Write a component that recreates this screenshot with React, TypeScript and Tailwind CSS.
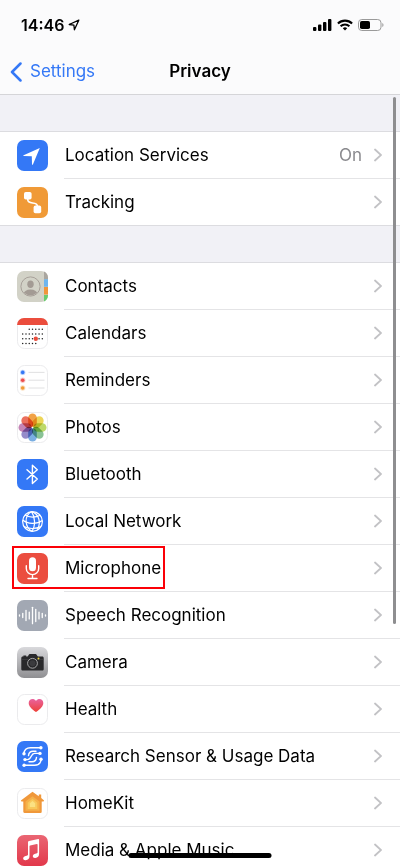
import type { ReactNode } from "react";

const calendarDots = [
  { y: 11.3, from: 2, to: 6 },
  { y: 16, from: 0, to: 6 },
  { y: 20.7, from: 0, to: 6 },
  { y: 25.4, from: 0, to: 4 },
];

const petals = ["#f09a36", "#ecd24a", "#b9d65c", "#7fbd8c", "#6fa8e0", "#8c82c6", "#c07bb0", "#ea6450"];

const speechBars = [0.6, 2, 5, 3.4, 8.2, 6, 3.4, 2, 0.6];

function Tile({ fill, outlined, children }: { fill: string; outlined?: boolean; children?: ReactNode }) {
  return (
    <svg viewBox="0 0 31 31" className="size-[31px] shrink-0" aria-hidden="true">
      <rect
        x={outlined ? 0.5 : 0}
        y={outlined ? 0.5 : 0}
        width={outlined ? 30 : 31}
        height={outlined ? 30 : 31}
        rx="7"
        fill={fill}
        stroke={outlined ? "#ebebed" : "none"}
      />
      {children}
    </svg>
  );
}

function LocationIcon() {
  return (
    <Tile fill="#3478f6">
      <path d="M22.8 8 6.6 15.2c-.5.3-.4.9.2.9l8 .2.2 8c0 .6.7.7.9.2z" fill="#fff" />
    </Tile>
  );
}

function TrackingIcon() {
  return (
    <Tile fill="#f09a37">
      <rect x="7" y="5" width="7.6" height="7.6" rx="1.8" fill="#fff" />
      <rect x="16.6" y="18.6" width="7.6" height="7.6" rx="1.8" fill="#fff" />
      <path d="M10.8 12v1c0 4.6 9.6 1.4 9.6 6v1" fill="none" stroke="#fff" strokeWidth="1.6" />
    </Tile>
  );
}

function ContactsIcon() {
  return (
    <Tile fill="#d2d2c7">
      <path d="M27 .5a7 7 0 0 1 4 6.500v1.500h-4z" fill="#aaa69f" />
      <path d="M27 8.300h4v7.400h-4z" fill="#6eb5ee" />
      <path d="M27 16h4v7.500h-4z" fill="#f0953a" />
      <path d="M27 24h4a7 7 0 0 1-4 6.500z" fill="#68cc6d" />
      <clipPath id="contact-circle">
        <circle cx="13.5" cy="15.5" r="9" />
      </clipPath>
      <circle cx="13.5" cy="15.5" r="9.6" fill="none" stroke="#a39b94" strokeWidth="0.9" />
      <g fill="#a39b94" clipPath="url(#contact-circle)">
        <ellipse cx="13.5" cy="13.2" rx="3.2" ry="3.7" />
        <ellipse cx="13.5" cy="23.6" rx="7.2" ry="5" />
      </g>
    </Tile>
  );
}

function CalendarIcon() {
  return (
    <Tile fill="#fff" outlined>
      <path d="M0 7a7 7 0 0 1 7-7h17a7 7 0 0 1 7 7z" fill="#eb4d3d" />
      {calendarDots.map((row) =>
        Array.from({ length: row.to - row.from + 1 }, (_, i) => (
          <circle key={`${row.y}-${i}`} cx={5.7 + (row.from + i) * 3.27} cy={row.y} r="0.75" fill="#222" />
        )),
      )}
      <circle cx="18.8" cy="20.7" r="2.2" fill="#eb4d3d" />
    </Tile>
  );
}

function RemindersIcon() {
  return (
    <Tile fill="#fff" outlined>
      {["#3478f6", "#eb4d4d", "#f09a37"].map((color, i) => (
        <g key={color}>
          <circle cx="5.7" cy={7.4 + i * 7.8} r="2.7" fill={color} opacity="0.3" />
          <circle cx="5.7" cy={7.4 + i * 7.8} r="1.8" fill={color} />
          <path d={`M11.5 ${7.4 + i * 7.8}H27.5`} stroke="#dcdcde" strokeWidth="0.9" />
        </g>
      ))}
    </Tile>
  );
}

function PhotosIcon() {
  return (
    <Tile fill="#fff" outlined>
      {petals.map((color, i) => (
        <rect
          key={color}
          x="11.2"
          y="1.5"
          width="8.6"
          height="13.2"
          rx="4.3"
          fill={color}
          opacity="0.92"
          transform={`rotate(${i * 45} 15.5 15.5)`}
          className="mix-blend-multiply"
        />
      ))}
    </Tile>
  );
}

function BluetoothIcon() {
  return (
    <Tile fill="#3478f6">
      <path
        d="M10 10.8 20.3 20l-4.9 4.5V6.3l4.9 4.5L10 20"
        fill="none"
        stroke="#fff"
        strokeWidth="1.4"
        strokeLinejoin="round"
        strokeLinecap="round"
      />
    </Tile>
  );
}

function NetworkIcon() {
  return (
    <Tile fill="#3478f6">
      <g fill="none" stroke="#fff" strokeWidth="1.2">
        <circle cx="15.5" cy="15.5" r="9.9" />
        <path d="M14.5 5.6c-8 4.900-6.500 15 .2 19.800M14.500 5.600c3.500 5 4.500 14 .2 19.800M14.500 5.600c8 2.400 9.500 11.400 6 17.800" />
        <path d="M8 9c4 2.800 11 2.600 15.200.2M5.700 14c4.800 4.400 14.400 4.400 19.700.6M7 20.600c4 2.400 11.800 2.600 16.800 0" />
      </g>
    </Tile>
  );
}

function MicrophoneIcon() {
  return (
    <Tile fill="#eb4d3f">
      <rect x="12" y="4.3" width="7" height="14" rx="3.5" fill="#fff" />
      <path
        d="M9.300 12.800v2.600a6.200 6.200 0 0 0 12.400 0v-2.600M15.500 21.600v3.600M11 25.500h9"
        fill="none"
        stroke="#fff"
        strokeWidth="1.4"
        strokeLinecap="round"
      />
    </Tile>
  );
}

function SpeechIcon() {
  return (
    <Tile fill="#a2a8b3">
      {speechBars.map((half, i) => (
        <path
          key={i}
          d={`M${2.5 + i * 3.25} ${15.5 - half}v${half * 2}`}
          stroke="#fff"
          strokeWidth="1.3"
          strokeLinecap="round"
        />
      ))}
    </Tile>
  );
}

function CameraIcon() {
  return (
    <Tile fill="url(#camera-bg)">
      <linearGradient id="camera-bg" x1="0" y1="0" x2="0" y2="1">
        <stop offset="0" stopColor="#d9d9dc" />
        <stop offset="1" stopColor="#8f8f92" />
      </linearGradient>
      <path
        d="M5.8 9.500h.6V8.400h2.800v1.100h1.300c.9 0 1-2.500 2.200-2.500h6c1.200 0 1.400 2.500 2.300 2.500h4.200c1 0 1.500.6 1.500 1.500v11c0 1-.5 1.600-1.500 1.600H5.800c-1 0-1.500-.6-1.500-1.600V11c0-.9.500-1.500 1.500-1.500z"
        fill="#29292b"
      />
      <path d="M4.300 12.500h22.400" stroke="#4c4c4e" strokeWidth="0.5" />
      <circle cx="15.5" cy="16.3" r="4.900" fill="#29292b" stroke="#b4b4b6" strokeWidth="0.9" />
      <circle cx="15.5" cy="16.3" r="3" fill="#3b3b3e" />
      <circle cx="21.5" cy="11.6" r="1" fill="#f0d53c" />
    </Tile>
  );
}

function HealthIcon() {
  return (
    <Tile fill="#fff" outlined>
      <linearGradient id="heart" x1="0" y1="0" x2="0" y2="1">
        <stop offset="0" stopColor="#e9639f" />
        <stop offset="1" stopColor="#ee4036" />
      </linearGradient>
      <path
        d="M19 18C14.500 14.800 11.700 12 11.700 8.900c0-4 5-5.300 7.300-2 2.300-3.300 7.300-2 7.300 2 0 3.100-2.800 5.900-7.300 9.100z"
        fill="url(#heart)"
      />
    </Tile>
  );
}

function ResearchIcon() {
  return (
    <Tile fill="#3478f6">
      <g fill="none" stroke="#fff" strokeWidth="1.4" strokeLinecap="round">
        <path d="M23.800 6.800H13.500c-4 0-6.300 1.800-6.600 6" />
        <path d="M7.200 24.200h10.300c4 0 6.300-1.800 6.600-6" />
        <path d="M22.800 12.400h-5.300c-3.800 0-3 6.200-7 6.200H8" />
        <path d="M11.500 14.600c.3-2.800 1.700-4.400 4.500-4.400h3" />
        <path d="M19.500 16.400c-.3 2.800-1.700 4.400-4.500 4.400h-3" />
      </g>
      <g fill="#fff">
        <circle cx="23.900" cy="6.800" r="1.700" />
        <circle cx="23" cy="12.400" r="1.700" />
        <circle cx="24" cy="18.200" r="1.700" />
        <circle cx="7" cy="12.800" r="1.700" />
        <circle cx="8" cy="18.600" r="1.700" />
        <circle cx="7.100" cy="24.200" r="1.700" />
      </g>
    </Tile>
  );
}

function HomeIcon() {
  return (
    <Tile fill="#fff" outlined>
      <path
        d="M15.500 3.800 4.200 12.300c-.5.500-.2 1.200.5 1.200h1.600v10.200c0 .8.400 1.200 1.200 1.200h16c.8 0 1.200-.4 1.200-1.200V13.500h1.600c.7 0 1-.7.500-1.200L24.200 10V6.500h-2.400v1.700z"
        fill="#f0983a"
      />
      <path d="m15.500 8.200-7 5.400v9.200h14v-9.200z" fill="#f5b14b" />
      <path d="m15.500 10.800-4.800 3.900v6.200h9.600v-6.200z" fill="#f8c95c" />
      <path d="m15.500 13-2.700 2.300v3.800h5.400v-3.800z" fill="#fbe183" />
    </Tile>
  );
}

function MusicIcon() {
  return (
    <Tile fill="url(#music-bg)">
      <linearGradient id="music-bg" x1="0" y1="0" x2="0" y2="1">
        <stop offset="0" stopColor="#ea6673" />
        <stop offset="1" stopColor="#e2384b" />
      </linearGradient>
      <path
        d="M21.300 4 12 5.900c-.7.200-1 .5-1 1.200v12.200c0 1-.4 1.300-1.300 1.500l-1.200.3c-3.300.8-2.900 4.500.2 4.200 2.500-.2 3.800-1.700 3.800-4.200v-9.800c0-.5.200-.7.600-.8l6.700-1.400c.5-.1.800.1.800.6v7.300c0 1-.4 1.300-1.300 1.500l-1.200.3c-3.300.8-2.900 4.500.2 4.200 2.500-.2 3.800-1.700 3.800-4.200V4.900c0-.7-.3-1-.8-.9z"
        fill="#fff"
      />
    </Tile>
  );
}

type Item = { label: string; icon: ReactNode; value?: string; marked?: boolean };

const locationItems: Item[] = [
  { label: "Location Services", icon: <LocationIcon />, value: "On" },
  { label: "Tracking", icon: <TrackingIcon /> },
];

const privacyItems: Item[] = [
  { label: "Contacts", icon: <ContactsIcon /> },
  { label: "Calendars", icon: <CalendarIcon /> },
  { label: "Reminders", icon: <RemindersIcon /> },
  { label: "Photos", icon: <PhotosIcon /> },
  { label: "Bluetooth", icon: <BluetoothIcon /> },
  { label: "Local Network", icon: <NetworkIcon /> },
  { label: "Microphone", icon: <MicrophoneIcon />, marked: true },
  { label: "Speech Recognition", icon: <SpeechIcon /> },
  { label: "Camera", icon: <CameraIcon /> },
  { label: "Health", icon: <HealthIcon /> },
  { label: "Research Sensor & Usage Data", icon: <ResearchIcon /> },
  { label: "HomeKit", icon: <HomeIcon /> },
  { label: "Media & Apple Music", icon: <MusicIcon /> },
];

function Row({ label, icon, value, marked }: Item) {
  return (
    <li className="group relative">
      <a href="#" className="flex h-[47px] gap-4 pl-[17px] group-last:h-[46px]">
        <span className="flex items-center">{icon}</span>
        <span className="flex flex-1 items-center border-b border-[#e4e4e6] pr-[18px] group-last:border-b-0">
          <span className="flex-1 pt-0.5 pl-px">{label}</span>
          {value && <span className="mr-3 pt-0.5 text-[#8a8a8e]">{value}</span>}
          <svg viewBox="0 0 8 14" className="h-3.5 w-2" fill="none" aria-hidden="true">
            <path d="m1 1.500 6 5.500-6 5.500" stroke="#c2c2c5" strokeWidth="1.8" strokeLinecap="round" />
          </svg>
        </span>
      </a>
      {marked && <span className="pointer-events-none absolute left-3 top-px h-[43px] w-[153px] border-2 border-[#fb0007]" />}
    </li>
  );
}

function Group({ items }: { items: Item[] }) {
  return (
    <ul className="mt-9 border-y border-[#dcdce0] bg-white">
      {items.map((item) => (
        <Row key={item.label} {...item} />
      ))}
    </ul>
  );
}

function StatusBar() {
  return (
    <div className="flex h-[50px] items-center pl-[21px] pr-4">
      <span className="text-base font-semibold">14:46</span>
      <svg viewBox="0 0 12 12" className="ml-1 size-3" fill="none" aria-hidden="true">
        <path d="M10.800 1.200 1.200 5.500l4.700.6.500 4.700z" stroke="#000" strokeWidth="1.3" strokeLinejoin="round" />
      </svg>
      <div className="ml-auto flex items-center gap-[5px]">
        <svg viewBox="0 0 19 12" className="h-3 w-[19px]" aria-hidden="true">
          <rect x="0" y="8" width="3.4" height="4" rx="1" />
          <rect x="5" y="5.5" width="3.4" height="6.5" rx="1" />
          <rect x="10" y="3" width="3.4" height="9" rx="1" />
          <rect x="15" y="0" width="3.4" height="12" rx="1" />
        </svg>
        <svg viewBox="0 0 16 12" className="h-3 w-4" fill="none" stroke="#000" aria-hidden="true">
          <path d="M.9 4.500a10.200 10.200 0 0 1 14.200 0" strokeWidth="2.1" />
          <path d="M3.600 7.300a6.300 6.300 0 0 1 8.800 0" strokeWidth="2" />
          <path d="m8 11.600 2.200-2.300a3.200 3.200 0 0 0-4.400 0z" fill="#000" stroke="none" />
        </svg>
        <svg viewBox="0 0 26 12" className="h-3 w-[26px]" aria-hidden="true">
          <rect x="0.5" y="0.5" width="22.5" height="11" rx="3.3" fill="none" stroke="#9a9a9a" />
          <rect x="2" y="2" width="10" height="8" rx="1.8" />
          <path d="M24.300 4v4c1.600-.6 1.600-3.400 0-4z" fill="#9a9a9a" />
        </svg>
      </div>
    </div>
  );
}

export default function App() {
  return (
    <div className="relative flex h-screen flex-col overflow-hidden bg-[#f1f1f6] font-[Inter,sans-serif] text-[17px] text-black">
      <header className="shrink-0 border-b border-[#d5d5d8] bg-[#fbfbfc]">
        <StatusBar />
        <nav className="grid h-11 grid-cols-[1fr_auto_1fr] items-center px-2.5">
          <a href="#" className="flex items-center gap-2 text-[#3478f6]">
            <svg viewBox="0 0 12 20" className="h-5 w-3" fill="none" aria-hidden="true">
              <path d="M10.500 1.500 2 10l8.500 8.500" stroke="#3478f6" strokeWidth="2.5" strokeLinecap="round" strokeLinejoin="round" />
            </svg>
            Settings
          </a>
          <h1 className="font-semibold">Privacy</h1>
        </nav>
      </header>

      <main className="relative min-h-0 flex-1 overflow-hidden">
        <Group items={locationItems} />
        <Group items={privacyItems} />
        <div className="absolute right-1 top-0.5 h-[527px] w-[3px] rounded-full bg-[#8e8e90]" />
      </main>

      <div className="absolute bottom-2 left-1/2 h-[5px] w-[143px] -translate-x-1/2 rounded-full bg-black" />
    </div>
  );
}
